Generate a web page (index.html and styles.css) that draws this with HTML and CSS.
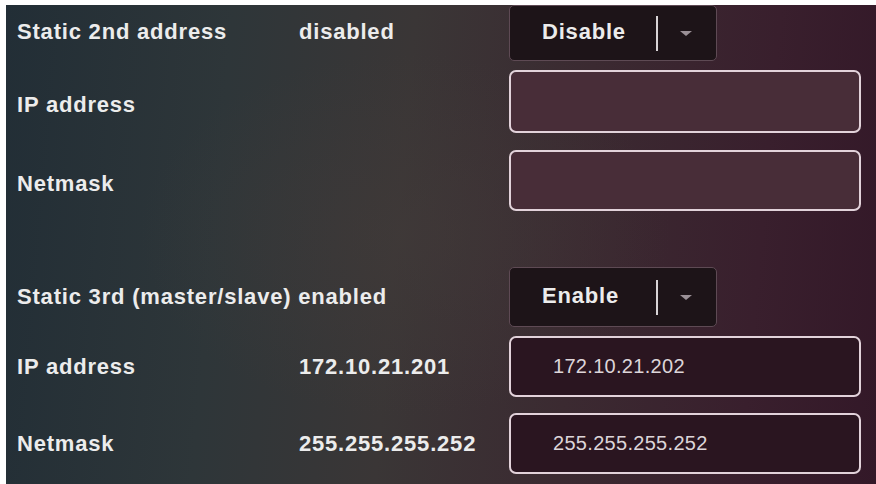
FILE: index.html
```html
<!DOCTYPE html>
<html>
<head>
<meta charset="utf-8">
<link rel="stylesheet" href="styles.css">
</head>
<body>
<div class="panel">
  <div class="row r1">
    <div class="label">Static 2nd address</div>
    <div class="value">disabled</div>
    <div class="select">
      <span class="sel-text">Disable</span>
      <span class="sep"></span>
      <span class="caret"></span>
    </div>
  </div>
  <div class="row r2">
    <div class="label shift">IP address</div>
    <div class="value"></div>
    <div class="input empty"></div>
  </div>
  <div class="row r3">
    <div class="label shift">Netmask</div>
    <div class="value"></div>
    <div class="input empty"></div>
  </div>
  <div class="row r4">
    <div class="label wide">Static 3rd (master/slave) enabled</div>
    <div class="select">
      <span class="sel-text">Enable</span>
      <span class="sep"></span>
      <span class="caret"></span>
    </div>
  </div>
  <div class="row r5">
    <div class="label">IP address</div>
    <div class="value">172.10.21.201</div>
    <div class="input filled"><span class="in-text">172.10.21.202</span></div>
  </div>
  <div class="row r6">
    <div class="label">Netmask</div>
    <div class="value">255.255.255.252</div>
    <div class="input filled"><span class="in-text">255.255.255.252</span></div>
  </div>
</div>
</body>
</html>
```
FILE: styles.css
```css
html, body {
  margin: 0;
  padding: 0;
  background: #ffffff;
  width: 876px;
  height: 484px;
  overflow: hidden;
}
body {
  padding: 5px 0 0 6px;
  box-sizing: border-box;
}
.panel {
  height: 479px;
  box-sizing: border-box;
  padding-left: 11px;
  font-family: "Liberation Sans", Arial, sans-serif;
  color: #ececec;
  background:
    radial-gradient(ellipse 380px 260px at 400px 230px, rgba(68, 60, 58, 0.45), rgba(68, 60, 58, 0) 70%),
    linear-gradient(95deg, #222e36 0%, #2e3639 25%, #3a3636 45%, #3b2a31 65%, #391f2d 85%, #331828 100%);
  display: flex;
  flex-direction: column;
}
.row {
  display: grid;
  grid-template-columns: 282px 210px 1fr;
  align-items: center;
}
.r1 { height: 56px; }
.r2 { height: 63px; margin-top: 9px; }
.r3 { height: 61px; margin-top: 17px; }
.r4 { height: 60px; margin-top: 56px; grid-template-columns: 492px 1fr; }
.r5 { height: 61px; margin-top: 9px; }
.r6 { height: 61px; margin-top: 16px; }
.r1 .label, .r1 .value { position: relative; top: -1px; }
.label, .value {
  font-size: 22px;
  font-weight: bold;
  letter-spacing: 0.8px;
  white-space: nowrap;
}
.label.shift { padding-top: 6px; }
.select {
  width: 208px;
  height: 100%;
  box-sizing: border-box;
  background: #1d1418;
  border: 1.5px solid #5e4a54;
  border-radius: 5px;
  display: flex;
  align-items: center;
  padding-left: 32px;
}
.sel-text {
  font-size: 22px;
  font-weight: bold;
  letter-spacing: 0.8px;
  color: #ececec;
  width: 114px;
  position: relative;
  top: -1px;
}
.sep {
  width: 2px;
  height: 35px;
  background: #d8d4d6;
}
.caret {
  margin-left: 22px;
  width: 0;
  height: 0;
  border-left: 6px solid transparent;
  border-right: 6px solid transparent;
  border-top: 5px solid #9a9096;
}
.input {
  width: 352px;
  height: 100%;
  box-sizing: border-box;
  border: 2px solid #e2d2da;
  border-radius: 7px;
  display: flex;
  align-items: center;
  padding-left: 42px;
}
.input.empty { background: #482d38; }
.input.filled { background: #2a1520; }
.in-text {
  font-size: 20px;
  letter-spacing: 0.3px;
  color: #ddd5d9;
}
```
